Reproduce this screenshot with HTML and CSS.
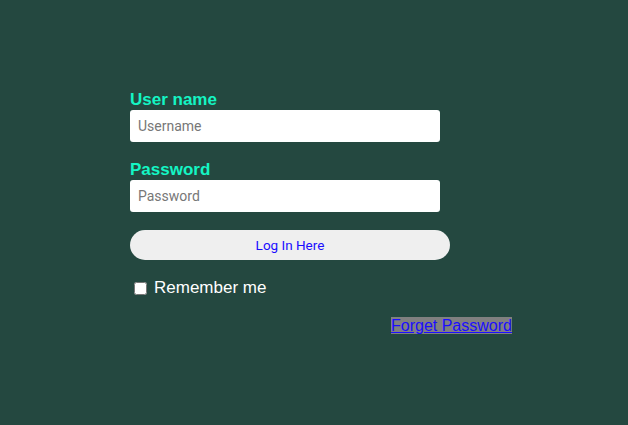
FILE: index.html
```
<!DOCTYPE html>
<html>
<head>
<meta charset="utf-8">
<link rel="stylesheet" href="styles.css">
</head>
<body>
<form class="login">
  <label class="lbl" for="u">User name</label>
  <input class="field" id="u" type="text" placeholder="Username">
  <label class="lbl lbl-second" for="p">Password</label>
  <input class="field" id="p" type="password" placeholder="Password">
  <button class="btn" type="button">Log In Here</button>
  <div class="remember">
    <input class="check" type="checkbox" id="r">
    <label class="remember-text" for="r">Remember me</label>
  </div>
  <div class="forgot-row"><a class="forgot" href="#">Forget Password</a></div>
</form>
</body>
</html>
```
FILE: styles.css
```
html, body {
  margin: 0;
  padding: 0;
  background: #244840;
  height: 100%;
}
body {
  font-family: "Liberation Sans", Arial, sans-serif;
}
.login {
  display: flex;
  flex-direction: column;
  align-items: flex-start;
  padding-top: 90px;
  padding-left: 130px;
}
.lbl {
  display: block;
  color: #14f5c4;
  font-weight: bold;
  font-size: 17px;
  line-height: 19px;
  margin-bottom: 1px;
}
.lbl-second {
  margin-top: 18px;
}
.field {
  box-sizing: border-box;
  width: 310px;
  height: 32px;
  border: none;
  border-radius: 3px;
  background: #fff;
  padding: 0 8px;
  font-family: Roboto, "Liberation Sans", sans-serif;
  font-size: 14px;
  color: #222;
  outline: none;
}
.field::placeholder {
  color: #777;
}
.btn {
  box-sizing: border-box;
  margin-top: 18px;
  width: 320px;
  height: 30px;
  border: none;
  border-radius: 15px;
  background: #efefef;
  color: #1a0dff;
  font-family: Roboto, "Liberation Sans", sans-serif;
  font-size: 13.5px;
  padding: 0;
}
.remember {
  display: flex;
  align-items: center;
  margin-top: 18px;
  height: 20px;
}
.check {
  width: 13px;
  height: 13px;
  margin: 0 7px 0 4px;
}
.remember-text {
  color: #fff;
  font-size: 17px;
  line-height: 20px;
}
.forgot-row {
  margin-top: 19px;
  padding-left: 261px;
}
.forgot {
  color: #1a0dff;
  background: #808080;
  font-size: 16px;
  line-height: 18px;
  text-decoration: underline;
}
```
